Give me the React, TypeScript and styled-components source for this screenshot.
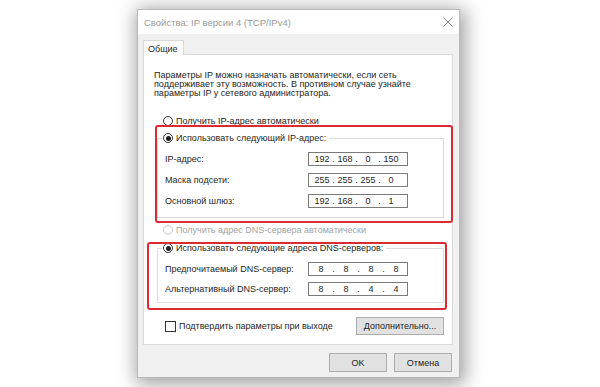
import { Fragment } from 'react';
import { createGlobalStyle, styled } from 'styled-components';

const GlobalStyle = createGlobalStyle`
  html, body {
    margin: 0;
    padding: 0;
    background: #ffffff;
  }

  body {
    width: 600px;
    height: 387px;
    overflow: hidden;
    font-family: 'Liberation Sans', Arial, sans-serif;
    color: #1e1e1e;
  }
`;

type Octets = [string, string, string, string];

const ipRows: { label: string; value: Octets }[] = [
  { label: 'IP-адрес:', value: ['192', '168', '0', '150'] },
  { label: 'Маска подсети:', value: ['255', '255', '255', '0'] },
  { label: 'Основной шлюз:', value: ['192', '168', '0', '1'] },
];

const dnsRows: { label: string; value: Octets }[] = [
  { label: 'Предпочитаемый DNS-сервер:', value: ['8', '8', '8', '8'] },
  { label: 'Альтернативный DNS-сервер:', value: ['8', '8', '4', '4'] },
];

const IpField = ({ value, wide }: { value: Octets; wide?: boolean }) => (
  <IpBox $wide={wide}>
    {value.map((octet, i) => (
      <Fragment key={i}>
        {i > 0 && <Dot>.</Dot>}
        <Octet $wide={wide}>{octet}</Octet>
      </Fragment>
    ))}
  </IpBox>
);

const CloseIcon = () => (
  <svg width="10" height="10" viewBox="0 0 10 10">
    <path d="M0.5 0.5 L9.5 9.5 M9.5 0.5 L0.5 9.5" stroke="#8c8c8c" strokeWidth="1" fill="none" />
  </svg>
);

export default function App() {
  return (
    <>
      <GlobalStyle />
      <Dialog>
        <TitleBar>
          <Title>Свойства: IP версии 4 (TCP/IPv4)</Title>
          <CloseIcon />
        </TitleBar>

        <Body>
          <TabStrip>
            <Tab>Общие</Tab>
          </TabStrip>

          <Panel>
            <Intro>
              Параметры IP можно назначать автоматически, если сеть
              <br />
              поддерживает эту возможность. В противном случае узнайте
              <br />
              параметры IP у сетевого администратора.
            </Intro>

            <RadioRow $top={17} $disabled={false}>
              <Radio />
              Получить IP-адрес автоматически
            </RadioRow>

            <Group $top={5} $bottom={10}>
              <Legend>
                <Radio $checked />
                Использовать следующий IP-адрес:
              </Legend>
              <Rows $gap={8}>
                {ipRows.map((row) => (
                  <FieldRow key={row.label}>
                    <FieldLabel>{row.label}</FieldLabel>
                    <IpField value={row.value} />
                  </FieldRow>
                ))}
              </Rows>
            </Group>

            <RadioRow $top={6} $disabled>
              <Radio $disabled />
              Получить адрес DNS-сервера автоматически
            </RadioRow>

            <Group $top={6} $bottom={7}>
              <Legend>
                <Radio $checked />
                Использовать следующие адреса DNS-серверов:
              </Legend>
              <Rows $gap={7}>
                {dnsRows.map((row) => (
                  <FieldRow key={row.label}>
                    <FieldLabel>{row.label}</FieldLabel>
                    <IpField value={row.value} wide />
                  </FieldRow>
                ))}
              </Rows>
            </Group>

            <BottomRow>
              <CheckLabel>
                <CheckBox />
                Подтвердить параметры при выходе
              </CheckLabel>
              <Button $width={88} $height={18}>
                Дополнительно...
              </Button>
            </BottomRow>

            {/* красные рамки-выделения поверх диалога */}
            <Highlight $left={12} $top={71} $width={298} $height={98} />
            <Highlight $left={4} $top={188} $width={300} $height={68} />
          </Panel>

          <Footer>
            <Button $width={58} $height={19}>
              OK
            </Button>
            <Button $width={58} $height={19}>
              Отмена
            </Button>
          </Footer>
        </Body>
      </Dialog>
    </>
  );
}

const Dialog = styled.div`
  box-sizing: border-box;
  width: 323px;
  height: 369px;
  margin: 9px 0 0 137px;

  background-color: #f0f0f0;
  border: 1px solid #b9b9b9;
  box-shadow: 2px 3px 18px 3px rgba(0, 0, 0, 0.38);
`;

const TitleBar = styled.div`
  display: flex;
  justify-content: space-between;
  align-items: center;

  height: 24px;
  padding: 0 6px 0 6px;

  background-color: #ffffff;
`;

const Title = styled.span`
  color: #9a9a9a;
  font-size: 9.5px;
`;

const Body = styled.div`
  padding: 6px 6px 0 5px;
`;

const TabStrip = styled.div`
  display: flex;
`;

const Tab = styled.div`
  box-sizing: border-box;
  width: 41px;
  height: 15px;
  margin-bottom: -1px;
  padding: 3px 0 0 4px;

  background-color: #ffffff;
  border: 1px solid #d9d9d9;
  border-bottom: 0;

  font-size: 9px;
  position: relative;
  z-index: 1;
`;

const Panel = styled.div`
  box-sizing: border-box;
  display: flex;
  flex-direction: column;

  width: 310px;
  height: 291px;
  padding: 0 8px 0 1px;

  position: relative;

  background-color: #ffffff;
  border: 1px solid #d9d9d9;
`;

const Intro = styled.p`
  margin: 16px 0 0 9px;

  font-size: 9px;
  line-height: 9px;
`;

const RadioRow = styled.div<{ $top: number; $disabled: boolean }>`
  display: flex;
  align-items: center;
  gap: 2px;

  height: 12px;
  margin-top: ${(p) => p.$top}px;
  padding-left: 18px;

  color: ${(p) => (p.$disabled ? '#a3a3a3' : '#1e1e1e')};
  font-size: 9px;
`;

const Radio = styled.span<{ $checked?: boolean; $disabled?: boolean }>`
  box-sizing: border-box;
  display: inline-flex;
  justify-content: center;
  align-items: center;

  width: 10px;
  height: 10px;
  margin-right: 1px;

  border: 1px solid ${(p) => (p.$disabled ? '#c8c8c8' : '#333333')};
  border-radius: 50%;
  background-color: #ffffff;

  &::after {
    content: '';
    display: ${(p) => (p.$checked ? 'block' : 'none')};
    width: 5px;
    height: 5px;
    border-radius: 50%;
    background-color: #1e1e1e;
  }
`;

const Group = styled.fieldset<{ $top: number; $bottom: number }>`
  margin: ${(p) => p.$top}px 0 0 12px;
  padding: 0 0 ${(p) => p.$bottom}px 4px;
  min-width: 0;

  border: 1px solid #dcdcdc;
`;

const Legend = styled.legend`
  display: flex;
  align-items: center;
  gap: 2px;

  height: 12px;
  padding: 0 3px 0 1px;

  font-size: 9px;
`;

const Rows = styled.div<{ $gap: number }>`
  display: flex;
  flex-direction: column;
  gap: ${(p) => p.$gap}px;

  margin-top: 8px;
`;

const FieldRow = styled.div`
  display: flex;
  align-items: center;

  height: 13px;
  padding-left: 3px;
`;

const FieldLabel = styled.span`
  width: 143px;

  font-size: 9px;
`;

const IpBox = styled.div<{ $wide?: boolean }>`
  box-sizing: border-box;
  display: flex;
  align-items: center;

  width: 100px;
  height: 14px;
  padding-left: ${(p) => (p.$wide ? 1 : 3)}px;

  background-color: #ffffff;
  border: 1px solid #7a7a7a;

  font-size: 9px;
`;

const Octet = styled.span<{ $wide?: boolean }>`
  width: ${(p) => (p.$wide ? 23 : 20)}px;

  text-align: center;
`;

const Dot = styled.span`
  width: 3px;

  text-align: center;
`;

const BottomRow = styled.div`
  display: flex;
  justify-content: space-between;
  align-items: center;

  margin-top: 14px;
  padding-left: 20px;
`;

const CheckLabel = styled.div`
  display: flex;
  align-items: center;
  gap: 3px;

  font-size: 9px;
`;

const CheckBox = styled.span`
  box-sizing: border-box;
  width: 11px;
  height: 11px;

  border: 1px solid #333333;
  background-color: #ffffff;
`;

const Button = styled.div<{ $width: number; $height: number }>`
  box-sizing: border-box;
  display: flex;
  justify-content: center;
  align-items: center;

  width: ${(p) => p.$width}px;
  height: ${(p) => p.$height}px;

  background-color: #e1e1e1;
  border: 1px solid #adadad;

  font-size: 9px;
`;

const Footer = styled.div`
  display: flex;
  justify-content: flex-end;
  gap: 7px;

  margin-top: 8px;
  padding-right: 1px;
`;

const Highlight = styled.div<{ $left: number; $top: number; $width: number; $height: number }>`
  box-sizing: border-box;
  width: ${(p) => p.$width}px;
  height: ${(p) => p.$height}px;

  position: absolute;
  left: ${(p) => p.$left - 1}px;
  top: ${(p) => p.$top - 1}px;

  border: 2px solid #dc2a33;
  border-radius: 3px;
  pointer-events: none;
`;
